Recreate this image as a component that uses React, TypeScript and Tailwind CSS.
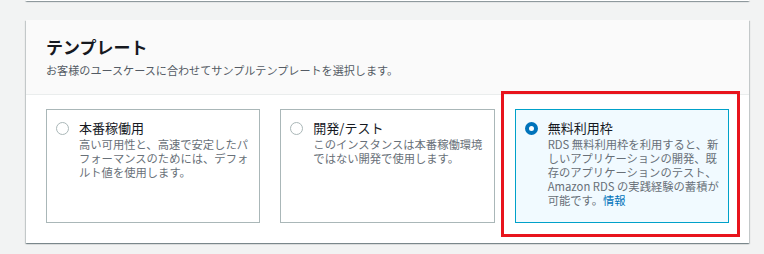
const options = [
  {
    title: '本番稼働用',
    lines: ['高い可用性と、高速で安定したパ', 'フォーマンスのためには、デフォ', 'ルト値を使用します。'],
  },
  {
    title: '開発/テスト',
    lines: ['このインスタンスは本番稼働環境', 'ではない開発で使用します。'],
  },
  {
    title: '無料利用枠',
    lines: ['RDS 無料利用枠を利用すると、新', 'しいアプリケーションの開発、既', '存のアプリケーションのテスト、', 'Amazon RDS の実践経験の蓄積が', '可能です。'],
    selected: true,
  },
];

const shadow =
  'shadow-[0_1px_1px_0_rgba(0,28,36,0.3),1px_1px_1px_0_rgba(0,28,36,0.15),-1px_1px_1px_0_rgba(0,28,36,0.15)]';

function Radio({ checked }: { checked?: boolean }) {
  return checked ? (
    <span className="mt-[3px] block h-[13px] w-[13px] shrink-0 rounded-full border-[4px] border-[#0073bb] bg-white" />
  ) : (
    <span className="mt-[3px] block h-[13px] w-[13px] shrink-0 rounded-full border border-[#aab7b8] bg-white" />
  );
}

function OptionCard({ title, lines, selected }: { title: string; lines: string[]; selected?: boolean }) {
  return (
    <div className="relative">
      <label
        className={
          'flex h-[114px] gap-[10px] border pl-[9px] pt-[9px] ' +
          (selected ? 'border-[#00a1c9] bg-[#f1faff]' : 'border-[#aab7b8] bg-white')
        }
      >
        <Radio checked={selected} />
        <div className="whitespace-nowrap">
          <div className="text-[13px] leading-[18px] text-[#16191f]">{title}</div>
          <div className="text-[11.3px] leading-[14px] text-[#687078]">
            {lines.map((l, i) => (
              <div key={i}>
                {l}
                {selected && i === lines.length - 1 && <a className="text-[#0073bb]">情報</a>}
              </div>
            ))}
          </div>
        </div>
      </label>
      {selected && (
        <div className="pointer-events-none absolute -bottom-[14px] -left-[14px] -right-[11px] -top-[18px] border-[3px] border-[#e8141c]" />
      )}
    </div>
  );
}

export default function App() {
  return (
    <div
      className="h-screen bg-[#f2f3f3] pl-[26px] pr-[15px]"
      style={{ fontFamily: '"Noto Sans CJK JP", sans-serif' }}
    >
      <div className={'h-[1px] bg-white ' + shadow} />
      <section className={'mt-[19px] bg-white ' + shadow}>
        <header className="border-b border-[#eaeded] bg-[#fafafa] px-[20px] pb-[16px] pt-[16px]">
          <h2 className="text-[17px] font-bold leading-[22px] text-[#16191f]">テンプレート</h2>
          <p className="mt-[4px] text-[11.1px] leading-[16px] text-[#545b64]">
            お客様のユースケースに合わせてサンプルテンプレートを選択します。
          </p>
        </header>
        <div className="grid grid-cols-3 gap-[20px] px-[20px] pb-[20px] pt-[14px]">
          {options.map((o) => (
            <OptionCard key={o.title} {...o} />
          ))}
        </div>
      </section>
    </div>
  );
}
